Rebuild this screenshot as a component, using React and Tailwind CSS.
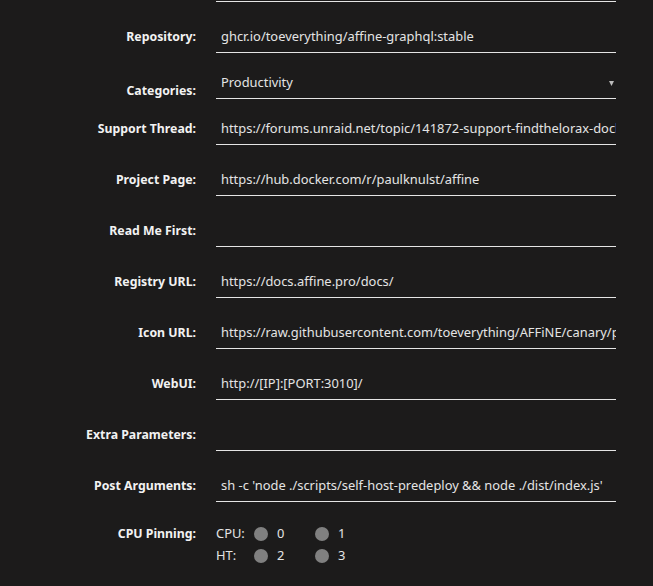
import React from "react";

const fields = [
  { label: "Repository:", value: "ghcr.io/toeverything/affine-graphql:stable", pt: "pt-[19px]" },
  { label: "Categories:", value: "Productivity", pt: "pt-[15px]", select: true },
  {
    label: "Support Thread:",
    value: "https://forums.unraid.net/topic/141872-support-findthelorax-docker-templates/",
    pt: "pt-[14px]",
  },
  { label: "Project Page:", value: "https://hub.docker.com/r/paulknulst/affine", pt: "pt-[19px]" },
  { label: "Read Me First:", value: "", pt: "pt-[19px]" },
  { label: "Registry URL:", value: "https://docs.affine.pro/docs/", pt: "pt-[19px]" },
  {
    label: "Icon URL:",
    value: "https://raw.githubusercontent.com/toeverything/AFFiNE/canary/packages/frontend/core/public/favicon-192.png",
    pt: "pt-[19px]",
  },
  { label: "WebUI:", value: "http://[IP]:[PORT:3010]/", pt: "pt-[19px]" },
  { label: "Extra Parameters:", value: "", pt: "pt-[19px]" },
  {
    label: "Post Arguments:",
    value: "sh -c 'node ./scripts/self-host-predeploy && node ./dist/index.js'",
    pt: "pt-[19px]",
  },
];

const cpus = [
  { name: "CPU:", cores: ["0", "1"] },
  { name: "HT:", cores: ["2", "3"] },
];

function Field({ label, value, pt, select }) {
  return (
    <div className={`flex ${pt}`}>
      <div
        className={`w-[196px] flex items-center justify-end font-bold text-[12.3px] text-[#f2f2f2] ${
          select ? "h-[30px] pt-[16px]" : "h-[31px] pt-[2px]"
        }`}
      >
        {label}
      </div>
      <div
        className={`relative ml-[20px] w-[400px] border-b border-[#e5e5e5] pl-[5px] pr-[5px] flex items-center overflow-hidden ${
          select ? "h-[31px]" : "h-[32px]"
        }`}
      >
        <span className="whitespace-nowrap text-[12.9px] text-[#e4e4e4]">{value}</span>
        {select && (
          <svg
            className="absolute right-[2px] top-[13px]"
            width="5"
            height="5"
            viewBox="0 0 5 5"
          >
            <polygon points="0,0 5,0 2.5,5" fill="#bcbcbc" />
          </svg>
        )}
      </div>
    </div>
  );
}

export default function App() {
  return (
    <div
      className="w-[653px] h-[586px] bg-[#1c1b1b] overflow-hidden"
      style={{ fontFamily: "'Noto Sans', 'Open Sans', sans-serif" }}
    >
      {/* tail of the row above */}
      <div className="flex">
        <div className="ml-[216px] w-[400px] h-[2px] border-b border-[#e5e5e5]" />
      </div>

      {fields.map((f) => (
        <Field key={f.label} {...f} />
      ))}

      <div className="flex pt-[21px]">
        <div className="w-[196px] h-[22px] flex items-center justify-end font-bold text-[12.3px] text-[#f2f2f2]">
          CPU Pinning:
        </div>
        <div className="ml-[20px] flex flex-col">
          {cpus.map((row) => (
            <div key={row.name} className="flex items-center h-[22px] text-[12.9px] text-[#e4e4e4]">
              <span className="w-[38px]">{row.name}</span>
              {row.cores.map((c) => (
                <div key={c} className="flex items-center w-[61px]">
                  <span className="w-[14px] h-[14px] rounded-full bg-[#808080]" />
                  <span className="ml-[9px]">{c}</span>
                </div>
              ))}
            </div>
          ))}
        </div>
      </div>
    </div>
  );
}
